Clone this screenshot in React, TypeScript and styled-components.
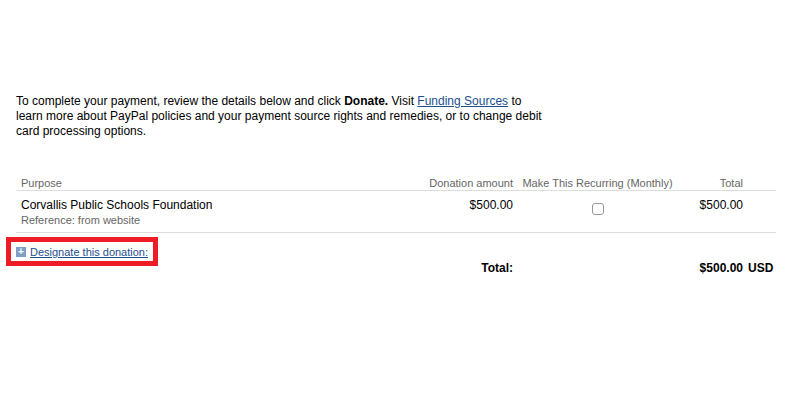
import React from "react";
import styled, { createGlobalStyle } from "styled-components";

const GlobalStyle = createGlobalStyle`
  body {
    margin: 0;
    background: #fff;
    font-family: "Liberation Sans", Arial, sans-serif;
    color: #000;
  }
`;

const Page = styled.div`
  width: 800px;
  height: 400px;
  padding: 94px 24px 0 16px;
  box-sizing: border-box;
`;

const Intro = styled.p`
  margin: 0;
  width: 530px;
  font-size: 12px;
  line-height: 15px;
`;

const Link = styled.a<{ $small?: boolean }>`
  color: #1b4f8e;
  text-decoration: underline;
  font-size: ${(p) => (p.$small ? "11px" : "inherit")};
  cursor: pointer;
`;

const Table = styled.div`
  margin-top: 37px;
  width: 760px;
  display: grid;
  grid-template-columns: 404px 97px 160px 70px 29px;
`;

const HeadCell = styled.div<{ $align?: string }>`
  font-size: 11px;
  line-height: 14px;
  color: #666;
  padding: 0 4px 0 5px;
  text-align: ${(p) => p.$align || "left"};
  border-bottom: 1px solid #ddd;
`;

const Cell = styled.div<{ $align?: string }>`
  font-size: 12px;
  line-height: 15px;
  padding: 7px 4px 4px 5px;
  text-align: ${(p) => p.$align || "left"};
  border-bottom: 1px solid #ddd;
`;

const Reference = styled.div`
  font-size: 11px;
  line-height: 15px;
  color: #666;
`;

const Check = styled.input`
  appearance: none;
  width: 12px;
  height: 12px;
  margin: 5px 0 0;
  border: 1px solid #999;
  border-radius: 3px;
  background: #fff;
`;

const FootCell = styled.div<{ $align?: string; $tight?: boolean }>`
  height: 44px;
  display: flex;
  align-items: flex-end;
  justify-content: ${(p) => (p.$align === "right" ? "flex-end" : "flex-start")};
  padding: 0 4px 1px ${(p) => (p.$tight ? "1px" : "5px")};
  font-size: 12px;
  line-height: 15px;
  font-weight: bold;
  box-sizing: border-box;
`;

const LinkCell = styled.div`
  height: 44px;
  padding-top: 4px;
  box-sizing: border-box;
`;

const Highlight = styled.div`
  display: inline-flex;
  align-items: center;
  gap: 4px;
  margin-left: -10px;
  height: 29px;
  padding: 0 5px;
  border: 5px solid #ee1c24;
  box-sizing: border-box;
`;

const PlusIcon = styled.span`
  display: inline-flex;
  align-items: center;
  justify-content: center;
  width: 10px;
  height: 10px;
  background: #7f9fc4;
  color: #fff;
  font-size: 10px;
  line-height: 10px;
  font-weight: bold;
`;

export default function App() {
  return (
    <>
      <GlobalStyle />
      <Page>
        <Intro>
          To complete your payment, review the details below and click <b>Donate.</b> Visit{" "}
          <Link>Funding Sources</Link> to learn more about PayPal policies and your payment
          source rights and remedies, or to change debit card processing options.
        </Intro>
        <Table>
          <HeadCell>Purpose</HeadCell>
          <HeadCell $align="right">Donation amount</HeadCell>
          <HeadCell $align="center">Make This Recurring (Monthly)</HeadCell>
          <HeadCell $align="right">Total</HeadCell>
          <HeadCell />

          <Cell>
            Corvallis Public Schools Foundation
            <Reference>Reference: from website</Reference>
          </Cell>
          <Cell $align="right">$500.00</Cell>
          <Cell $align="center">
            <Check type="checkbox" />
          </Cell>
          <Cell $align="right">$500.00</Cell>
          <Cell />

          <LinkCell>
            <Highlight>
              <PlusIcon>+</PlusIcon>
              <Link $small>Designate this donation:</Link>
            </Highlight>
          </LinkCell>
          <FootCell $align="right">Total:</FootCell>
          <FootCell />
          <FootCell $align="right">$500.00</FootCell>
          <FootCell $tight>USD</FootCell>
        </Table>
      </Page>
    </>
  );
}
